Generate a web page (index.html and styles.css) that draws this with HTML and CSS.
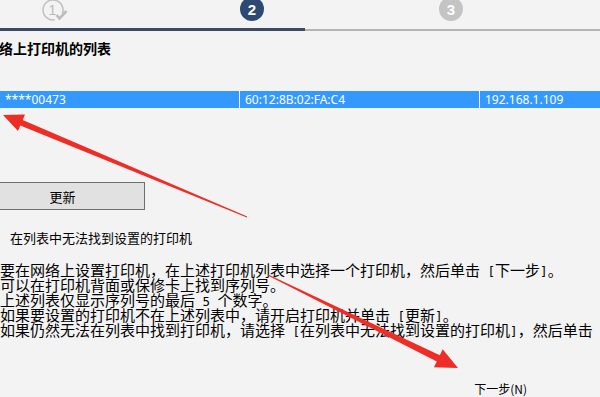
FILE: index.html
```html
<!DOCTYPE html>
<html lang="zh-CN">
<head>
  <meta charset="UTF-8" />
  <title>打印机设置</title>
  <link rel="stylesheet" href="styles.css">
</head>
<body>
  <div class="steps">
    <div class="step step-done">
      <svg class="step-ring" width="32" height="26" viewBox="0 0 32 26">
        <path d="M12.7 20.8 A10 10 0 1 1 20.4 14.4" fill="none" stroke="#c2c2c2" stroke-width="1.6" />
        <path d="M14.5 16 L17.5 19.5 L24.5 12" fill="none" stroke="#bdbdbd" stroke-width="2.6" />
      </svg>
      <span class="step-num">1</span>
    </div>
    <div class="step step-current">2</div>
    <div class="step step-next">3</div>
  </div>
  <div class="progress">
    <div class="progress-done"></div>
    <div class="progress-rest"></div>
  </div>

  <h1 class="title">络上打印机的列表</h1>

  <div class="printer-list">
    <div class="printer-row selected">
      <div class="cell">****00473</div>
      <div class="cell">60:12:8B:02:FA:C4</div>
      <div class="cell">192.168.1.109</div>
    </div>
  </div>

  <button class="refresh">更新</button>

  <div class="not-found">在列表中无法找到设置的打印机</div>

  <p class="help">要在网络上设置打印机，在上述打印机列表中选择一个打印机，然后单击<span class="half"> [</span>下一步<span class="half">]</span>。<br>可以在打印机背面或保修卡上找到序列号。<br>上述列表仅显示序列号的最后<span class="half"> 5 </span>个数字。<br>如果要设置的打印机不在上述列表中，请开启打印机并单击<span class="half"> [</span>更新<span class="half">]</span>。<br>如果仍然无法在列表中找到打印机，请选择<span class="half"> [</span>在列表中无法找到设置的打印机<span class="half">]</span>，然后单击<span class="half"> [</span>下一步<span class="half">]</span>。</p>

  <div class="footer">
    <button class="next">下一步(N)</button>
  </div>

  <!-- red annotation arrows -->
  <svg class="arrows" width="600" height="397" viewBox="0 0 600 397">
    <polygon points="3,115 25,114.4 22.7,119.9 247.2,216.5 246.8,217.5 20.3,125.5 18,131" fill="#ee2d26" />
    <polygon points="458,368 442.7,349.3 439.8,355.2 268.2,274.6 267.8,275.4 436.8,361.4 433.9,367.3" fill="#ee2d26" />
  </svg>
</body>
</html>
```

FILE: styles.css
```css
* { box-sizing: border-box; }
body { margin: 0; width: 600px; height: 397px; overflow: hidden; position: relative; background: #f3f3f3; color: #000; font-family: "Noto Sans CJK SC", "Noto Sans", sans-serif; }

.steps { display: grid; grid-template-columns: 200px 200px 200px; height: 28px; }
.step { width: 24px; height: 24px; margin-top: -3px; margin-left: 40px; border-radius: 50%; display: flex; align-items: center; justify-content: center; color: #fff; font: bold 15px "Liberation Sans", sans-serif; }
.step-done { position: relative; margin-left: 42px; margin-top: -1px; color: #b9b9b9; font-weight: normal; font-size: 14px; }
.step-ring { position: absolute; left: 0; top: 0; }
.step-num { position: relative; margin: 0 3px 2px 0; }
.step-current { background: #2e4a72; }
.step-next { background: #c4c4c4; margin-left: 39px; }

.progress { display: flex; height: 3px; }
.progress-done { width: 305px; background: #3d4a63; }
.progress-rest { flex: 1; height: 2px; margin-top: 1px; background: #b3b3b3; }

.title { margin: 7px 0 0 -1px; font-size: 14px; line-height: 20px; font-weight: bold; }

.printer-list { margin-top: 33px; }
.printer-row { display: grid; grid-template-columns: 239px 239px 1fr; column-gap: 1px; background: #fff; }
.printer-row .cell { height: 17px; line-height: 17px; padding-left: 5px; background: #3399ff; color: #fff; font-family: "Noto Sans", sans-serif; font-size: 12px; white-space: nowrap; overflow: hidden; }

.refresh { display: block; margin: 74px 0 0 -20px; width: 165px; height: 28px; border: 1px solid #6f6f6f; background: #e1e1e1; font-family: inherit; font-size: 13px; color: #000; padding: 0; }

.not-found { margin: 19px 0 0 10px; height: 18px; line-height: 18px; font-size: 13px; }

.help { margin: 15px 0 0 0; height: 75px; font-size: 15px; line-height: 15px; white-space: nowrap; }
.help .half { font-family: "DejaVu Sans Mono", monospace; font-size: 12.5px; line-height: 0; white-space: pre; }

.footer { display: flex; justify-content: flex-end; margin-top: 41px; padding-right: 73px; }
.next { height: 20px; padding: 0; border: none; background: none; font-family: inherit; font-size: 12px; color: #000; }

.arrows { position: absolute; left: 0; top: 0; pointer-events: none; }
```
